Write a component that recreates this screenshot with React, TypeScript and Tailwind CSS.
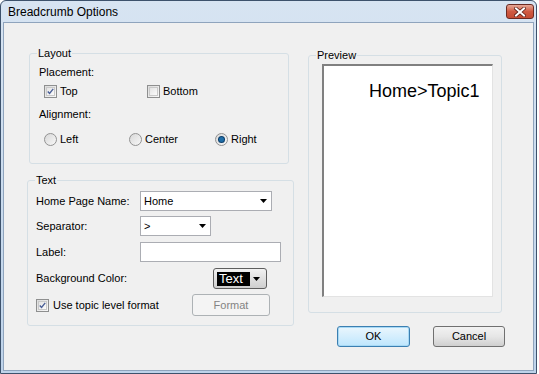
import React from "react";

const font = { fontFamily: '"Liberation Sans", Arial, sans-serif' };

function Check({ checked }: { checked: boolean }) {
  return (
    <span className="inline-flex w-[13px] h-[13px] border border-[#8e8f8f] bg-gradient-to-br from-[#dcdcdc] to-[#f8f8f8] items-center justify-center shrink-0">
      <span className="w-[9px] h-[9px] border border-[#c9c9c9] bg-gradient-to-br from-[#e4e4e4] to-[#fbfbfb] flex items-center justify-center">
        {checked && (
          <svg width="9" height="9" viewBox="0 0 9 9">
            <path d="M1 4.5 L3.3 7 L8 1.2" fill="none" stroke="#4a5f97" strokeWidth="1.8" />
          </svg>
        )}
      </span>
    </span>
  );
}

function Radio({ checked }: { checked: boolean }) {
  return (
    <span className="inline-flex w-[13px] h-[13px] rounded-full border border-[#929292] bg-gradient-to-br from-[#d8d8d8] to-[#f8f8f8] items-center justify-center shrink-0">
      {checked && <span className="w-[5px] h-[5px] rounded-full bg-[#1f6ea8] ring-1 ring-[#0b3d6a]" />}
    </span>
  );
}

function Arrow() {
  return (
    <svg width="7" height="4" viewBox="0 0 7 4">
      <path d="M0 0 L7 0 L3.5 4 Z" fill="#000" />
    </svg>
  );
}

function Group({ label, className, children }: { label: string; className: string; children: React.ReactNode }) {
  return (
    <div className={`relative border border-[#d5dfe5] rounded-[3px] ${className}`}>
      <span className="absolute left-[7px] -top-[8px] px-[1px] bg-[#f0f0f0] text-[11px] leading-[14px] text-black">{label}</span>
      {children}
    </div>
  );
}

export default function App() {
  return (
    <div className="w-[539px] h-[374px] bg-white" style={font}>
      <div className="w-[537px] h-[374px] border border-[#3d526c] rounded-t-[6px] bg-gradient-to-b from-[#d7e4f2] to-[#bed3ea] flex flex-col px-[2px] pb-[2px]">
        <div className="h-[21px] flex items-center justify-between pl-[5px] pr-[0px]">
          <span className="text-[12px] text-black leading-none">Breadcrumb Options</span>
          <div className="w-[28px] h-[15px] rounded-[3px] border border-[#6b2a22] bg-gradient-to-b from-[#e5a898] via-[#cf5a42] to-[#c44b33] flex items-center justify-center">
            <svg width="12" height="10" viewBox="0 0 12 10">
              <path d="M2 1.5 L10 8.5 M10 1.5 L2 8.5" stroke="#5c2018" strokeWidth="3.6" strokeLinecap="square" />
              <path d="M2 1.5 L10 8.5 M10 1.5 L2 8.5" stroke="#fff" strokeWidth="2" strokeLinecap="square" />
            </svg>
          </div>
        </div>
        <div className="flex-1 bg-[#f0f0f0] border border-[#8fa4bd] flex text-[11px] text-black">
          {/* left column */}
          <div className="pl-[23px] pt-[30px] flex flex-col">
            <Group label="Layout" className="ml-[2px] w-[260px] h-[111px]">
              <div className="pl-[9px] pt-[11px] flex flex-col">
                <div className="h-[14px] leading-[14px]">Placement:</div>
                <div className="flex items-center mt-[5px] pl-[5px] h-[14px]">
                  <Check checked />
                  <span className="ml-[3px] w-[87px]">Top</span>
                  <Check checked={false} />
                  <span className="ml-[3px]">Bottom</span>
                </div>
                <div className="h-[14px] leading-[14px] mt-[9px]">Alignment:</div>
                <div className="flex items-center mt-[11px] pl-[5px] h-[14px]">
                  <Radio checked={false} />
                  <span className="ml-[3px] w-[69px]">Left</span>
                  <Radio checked={false} />
                  <span className="ml-[3px] w-[70px]">Center</span>
                  <Radio checked />
                  <span className="ml-[3px]">Right</span>
                </div>
              </div>
            </Group>
            <Group label="Text" className="mt-[16px] w-[267px] h-[146px]">
              <div className="pl-[8px] pt-[10px] flex flex-col">
                <div className="flex items-center h-[20px]">
                  <span className="w-[104px]">Home Page Name:</span>
                  <div className="w-[132px] h-[20px] border border-[#abadb3] bg-white flex items-center justify-between pl-[3px] pr-[4px]">
                    <span>Home</span>
                    <Arrow />
                  </div>
                </div>
                <div className="flex items-center h-[20px] mt-[5px]">
                  <span className="w-[104px]">Separator:</span>
                  <div className="w-[71px] h-[20px] border border-[#abadb3] bg-white flex items-center justify-between pl-[3px] pr-[4px]">
                    <span>&gt;</span>
                    <Arrow />
                  </div>
                </div>
                <div className="flex items-center h-[20px] mt-[6px]">
                  <span className="w-[104px]">Label:</span>
                  <div className="w-[141px] h-[20px] border border-[#abadb3] bg-white" />
                </div>
                <div className="flex items-center h-[21px] mt-[6px]">
                  <span className="w-[177px]">Background Color:</span>
                  <div className="w-[54px] h-[21px] border border-[#5e5e5e] rounded-[3px] bg-gradient-to-b from-[#f2f2f2] to-[#cfcfcf] flex items-center pl-[3px] pr-[4px]">
                    <span className="bg-black text-white text-[13px] leading-[14px] w-[33px] pl-[2px]">Text</span>
                    <span className="ml-[3px] flex"><Arrow /></span>
                  </div>
                </div>
                <div className="flex items-center h-[22px] mt-[5px]">
                  <Check checked />
                  <span className="ml-[4px] w-[139px]">Use topic level format</span>
                  <div className="w-[78px] h-[22px] border border-[#adb2b5] rounded-[3px] bg-[#f4f4f4] text-[#838383] flex items-center justify-center">Format</div>
                </div>
              </div>
            </Group>
          </div>
          {/* right column */}
          <div className="pl-[14px] pt-[32px] flex flex-col">
            <Group label="Preview" className="w-[194px] h-[258px]">
              <div className="ml-[13px] mt-[8px] w-[171px] h-[233px] bg-white border-t-2 border-l-2 border-[#808080] border-r border-b border-r-[#e3e3e3] border-b-[#e3e3e3]">
                <div className="pl-[45px] pt-[15px] text-[18px] leading-[20px]">Home&gt;Topic1</div>
              </div>
            </Group>
            <div className="flex mt-[13px] pl-[29px] gap-[23px]">
              <div className="w-[73px] h-[21px] rounded-[3px] border border-[#3c7fb1] bg-gradient-to-b from-[#eaf6fd] to-[#bee6fd] flex items-center justify-center shadow-[inset_0_0_0_1px_#a7d9f5]">OK</div>
              <div className="w-[72px] h-[21px] rounded-[3px] border border-[#707070] bg-gradient-to-b from-[#f2f2f2] via-[#e6e6e6] to-[#cfcfcf] flex items-center justify-center">Cancel</div>
            </div>
          </div>
        </div>
      </div>
    </div>
  );
}
